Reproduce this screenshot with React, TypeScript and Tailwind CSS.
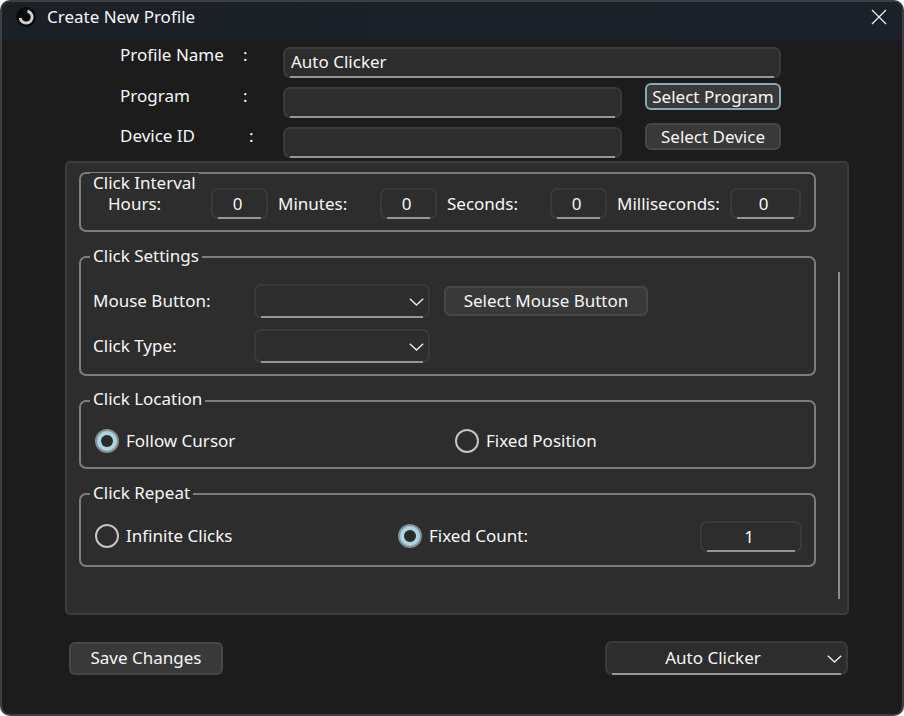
import React from 'react';

const panelBg = 'bg-[#2d2d2d]';

function Field({ value = '', className = '' }: { value?: string; className?: string }) {
  return (
    <div className={`relative flex items-center rounded-[7px] border-2 border-[#3a3a3a] bg-[#2d2d2d] ${className}`}>
      <span className="w-full">{value}</span>
      <div className="absolute left-[5px] right-[5px] bottom-[-2px] h-[2px] bg-[#969696]" />
    </div>
  );
}

function Chevron() {
  return (
    <svg width="15" height="8" viewBox="0 0 15 8" fill="none" className="shrink-0">
      <path d="M0.8 0.8L7.5 7L14.2 0.8" stroke="#f0f0f0" strokeWidth="1.3" />
    </svg>
  );
}

function Combo({ value = '', className = '' }: { value?: string; className?: string }) {
  return (
    <div className={`relative flex items-center rounded-[7px] border-2 border-[#3a3a3a] bg-[#2d2d2d] ${className}`}>
      <span className="flex-1 pr-[4px] text-center">{value}</span>
      <div className="flex w-[23px] justify-center pt-[1px]">
        <Chevron />
      </div>
      <div className="absolute left-[5px] right-[5px] bottom-[-2px] h-[2px] bg-[#969696]" />
    </div>
  );
}

function Button({ label, className = '' }: { label: string; className?: string }) {
  return (
    <button className={`flex items-center justify-center rounded-[6px] border-2 bg-[#393939] ${className}`}>
      {label}
    </button>
  );
}

function Radio({ checked = false }: { checked?: boolean }) {
  if (checked) {
    return (
      <div className="flex h-[24px] w-[24px] shrink-0 items-center justify-center rounded-full border-2 border-[#848f93] bg-[#a9d4e0]">
        <div className="h-[12px] w-[12px] rounded-full bg-[#2b2b2b]" />
      </div>
    );
  }
  return <div className="h-[24px] w-[24px] shrink-0 rounded-full border-2 border-[#c4c4c4]" />;
}

function Group({ title, className = '', children, legendClass = '-top-[13px]' }: { title: string; className?: string; children: React.ReactNode; legendClass?: string }) {
  return (
    <div className={`relative rounded-[7px] border-2 border-[#7d7d7d] ${className}`}>
      <span className={`absolute left-[9px] ${legendClass} ${panelBg} px-[3px] leading-[22px]`}>{title}</span>
      {children}
    </div>
  );
}

export default function App() {
  return (
    <div
      className="flex h-[716px] w-[904px] flex-col overflow-hidden rounded-[10px] border-2 border-[#3f3f3f] bg-[#1c1c1c] text-[17px] text-[#f6f6f6]"
      style={{ fontFamily: '"Noto Sans", "Open Sans", sans-serif' }}
    >
      <div className="flex h-[38px] shrink-0 items-center bg-gradient-to-r from-[#1a2025] to-[#1a212b] pb-[9px] pl-[14px] pr-[15px]">
        <svg width="20" height="20" viewBox="0 0 20 20" fill="none">
          <circle cx="10" cy="10" r="10" fill="#0a0a0a" />
          <path d="M11.5 4.2 A6 6 0 1 1 4.2 11" stroke="#cfcfcf" strokeWidth="3" />
        </svg>
        <span className="ml-[11px] flex-1">Create New Profile</span>
        <svg width="16" height="16" viewBox="0 0 16 16" fill="none">
          <path d="M1 1L15 15M15 1L1 15" stroke="#f0f0f0" strokeWidth="1.3" />
        </svg>
      </div>

      <div className="ml-[118px] mt-[7px] flex flex-col">
        <div className="flex h-[40px] items-start">
          <span className="mt-[-5px] w-[123px]">Profile Name</span>
          <span className="mt-[-5px] w-[40px]">:</span>
          <Field value="Auto Clicker" className="h-[31px] w-[498px] pb-[2px] pl-[6px]" />
        </div>
        <div className="flex h-[40px] items-start">
          <span className="mt-[-4px] w-[123px]">Program</span>
          <span className="mt-[-4px] w-[40px]">:</span>
          <Field className="h-[31px] w-[339px]" />
          <Button label="Select Program" className="ml-[23px] mt-[-4px] h-[27px] w-[136px] border-[#86a9b7]" />
        </div>
        <div className="flex h-[34px] items-start">
          <span className="mt-[-4px] w-[129px]">Device ID</span>
          <span className="mt-[-4px] w-[34px]">:</span>
          <Field className="h-[31px] w-[339px]" />
          <Button label="Select Device" className="ml-[23px] mt-[-4px] h-[27px] w-[136px] border-[#474747]" />
        </div>
      </div>

      <div className={`relative ml-[63px] h-[454px] w-[784px] shrink-0 rounded-[5px] border-2 border-[#3c3c3c] ${panelBg} pl-[12px] pt-[9px]`}>
        <Group title="Click Interval" legendClass="top-[-1px] !leading-[20px]" className="h-[60px] w-[737px]">
          <div className="flex h-full items-center pl-[27px] pt-[2px]">
            <span className="w-[103px] pt-[2px]">Hours:</span>
            <Field value="0" className="h-[31px] w-[57px] pr-[4px] pt-[2px] text-center" />
            <span className="ml-[10px] w-[102px] pt-[2px]">Minutes:</span>
            <Field value="0" className="h-[31px] w-[57px] pr-[4px] pt-[2px] text-center" />
            <span className="ml-[10px] w-[103px] pt-[2px]">Seconds:</span>
            <Field value="0" className="h-[31px] w-[57px] pr-[4px] pt-[2px] text-center" />
            <span className="ml-[10px] w-[113px] pt-[2px]">Milliseconds:</span>
            <Field value="0" className="h-[31px] w-[71px] pr-[4px] pt-[2px] text-center" />
          </div>
        </Group>

        <Group title="Click Settings" className="mt-[24px] h-[120px] w-[737px]">
          <div className="flex flex-col pl-[12px] pt-[26px]">
            <div className="flex h-[45px] items-start">
              <span className="mt-[4px] w-[161px]">Mouse Button:</span>
              <Combo className="h-[34px] w-[176px]" />
              <Button label="Select Mouse Button" className="ml-[14px] mt-[2px] h-[30px] w-[204px] border-[#474747]" />
            </div>
            <div className="flex h-[34px] items-start">
              <span className="mt-[4px] w-[161px]">Click Type:</span>
              <Combo className="h-[34px] w-[176px]" />
            </div>
          </div>
        </Group>

        <Group title="Click Location" legendClass="-top-[14px]" className="mt-[24px] h-[69px] w-[737px]">
          <div className="flex h-full items-center pl-[14px] pt-[12px]">
            <div className="flex w-[360px] items-center gap-[7px]">
              <Radio checked />
              <span>Follow Cursor</span>
            </div>
            <div className="flex items-center gap-[7px]">
              <Radio />
              <span>Fixed Position</span>
            </div>
          </div>
        </Group>

        <Group title="Click Repeat" className="mt-[24px] h-[74px] w-[737px]">
          <div className="flex h-full items-center pl-[14px] pt-[12px]">
            <div className="flex w-[303px] items-center gap-[7px]">
              <Radio />
              <span>Infinite Clicks</span>
            </div>
            <div className="flex w-[302px] items-center gap-[7px]">
              <Radio checked />
              <span>Fixed Count:</span>
            </div>
            <Field value="1" className="h-[31px] w-[102px] pr-[4px] pt-[2px] text-center" />
          </div>
        </Group>

        <div className="absolute right-[7px] top-[109px] h-[327px] w-[2px] bg-[#8a8a8a]" />
      </div>

      <div className="ml-[67px] mt-[26px] flex items-center">
        <Button label="Save Changes" className="h-[33px] w-[154px] border-[#474747]" />
        <Combo value="Auto Clicker" className="ml-[382px] h-[34px] w-[243px]" />
      </div>
    </div>
  );
}
